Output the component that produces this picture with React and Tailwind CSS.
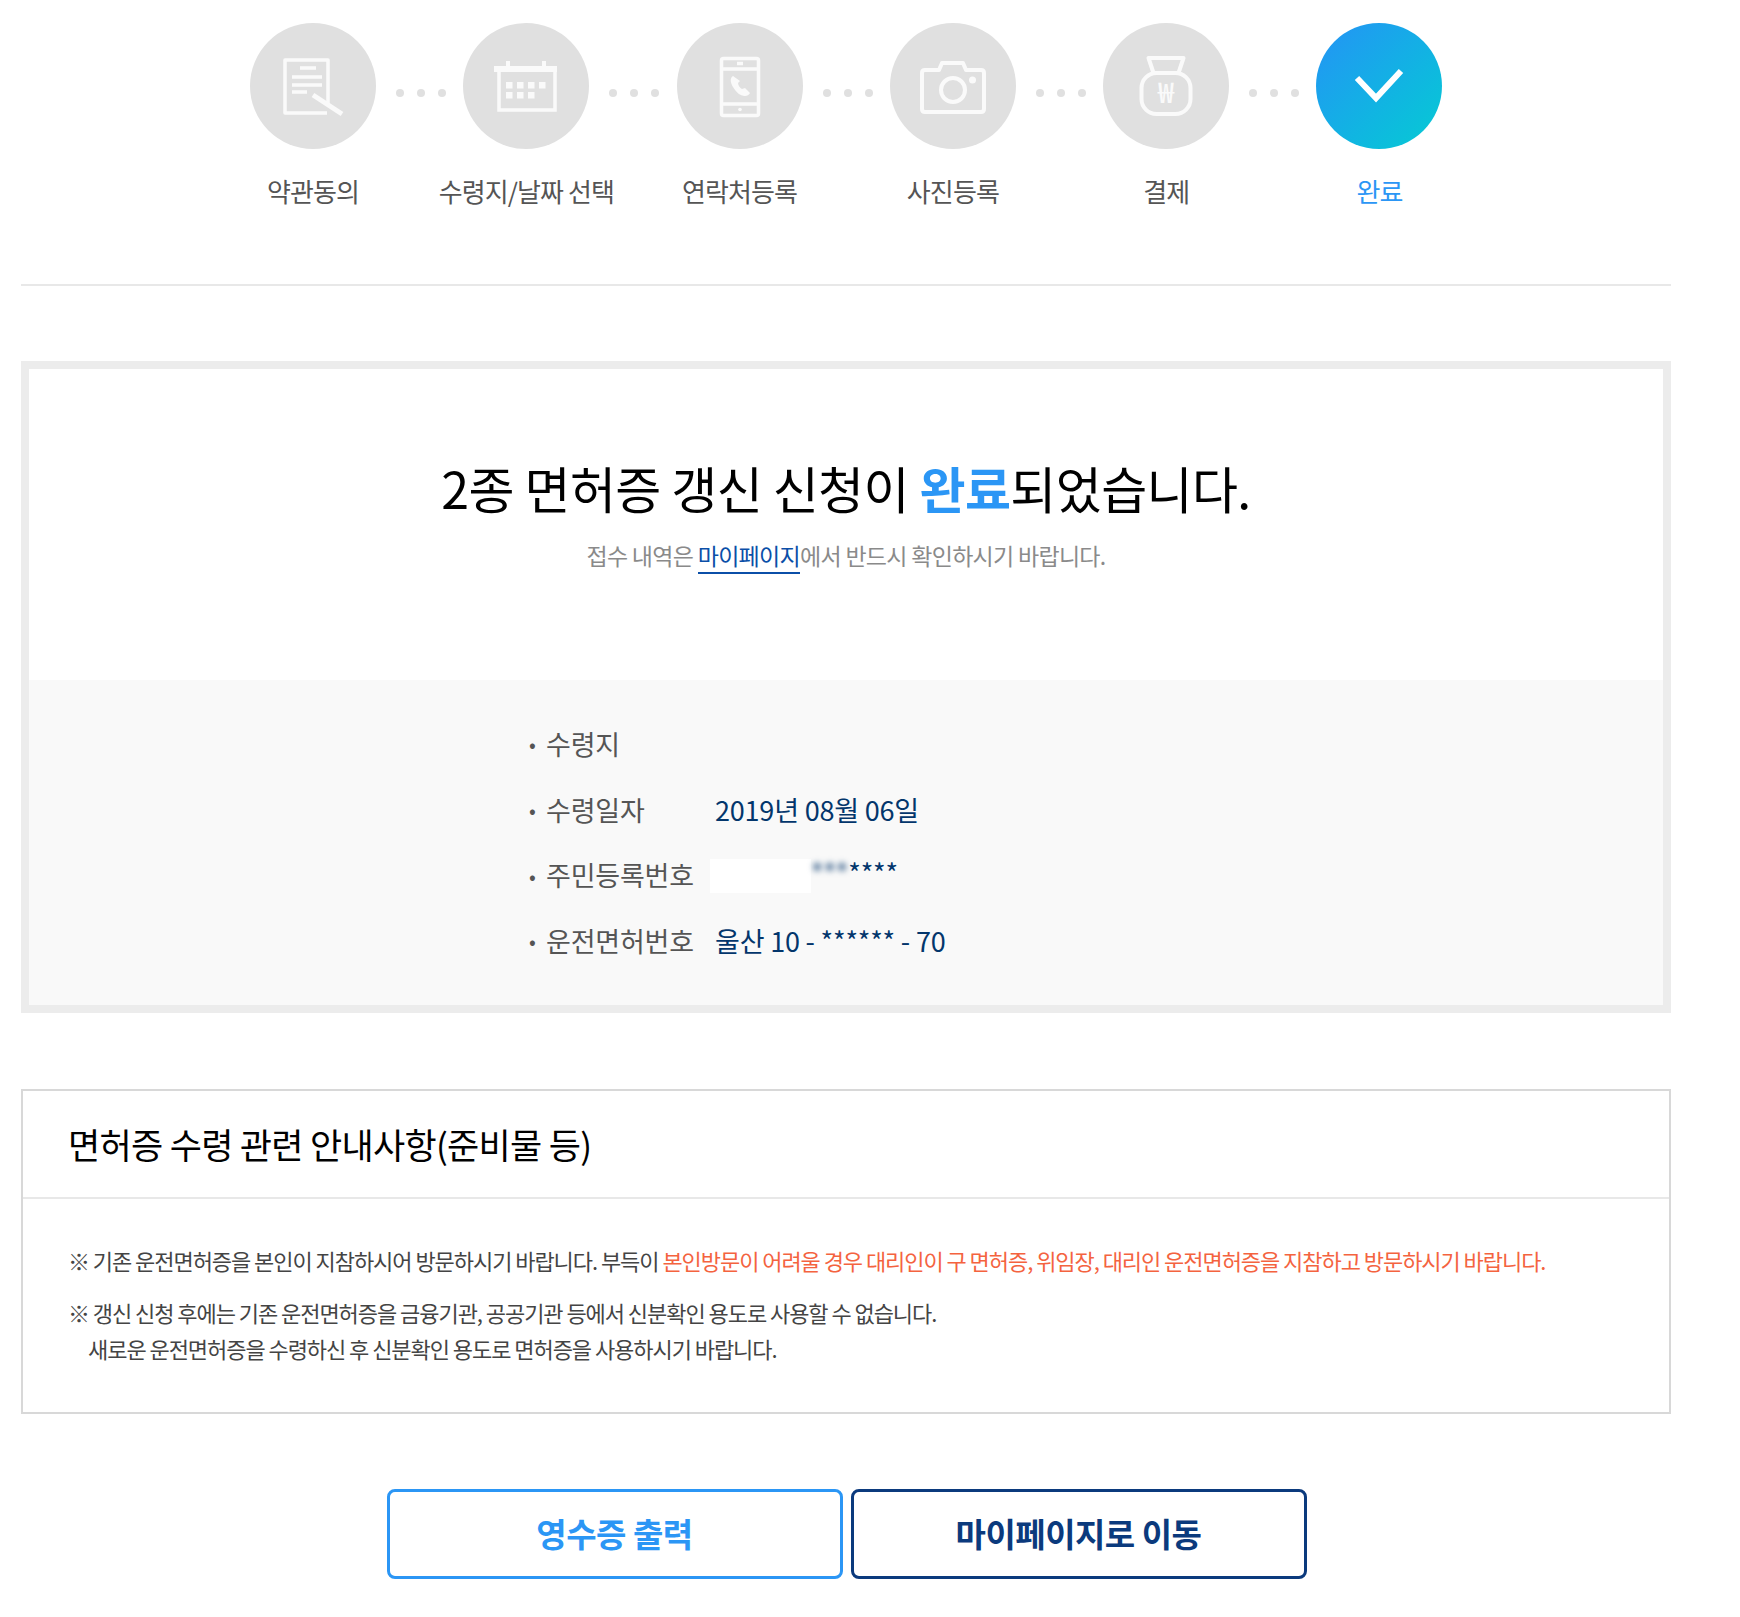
import React from 'react'

const steps = [
  { label: '약관동의', icon: 'doc' },
  { label: '수령지/날짜 선택', icon: 'calendar' },
  { label: '연락처등록', icon: 'phone' },
  { label: '사진등록', icon: 'camera' },
  { label: '결제', icon: 'bag' },
  { label: '완료', icon: 'check', active: true },
]

const StepIcon = ({ name }) => (
  <svg viewBox="0 0 126 126" className="w-[126px] h-[126px]" fill="none" stroke="#fafafa" strokeWidth="3.5">
    {name === 'doc' && (
      <>
        <path d="M78 82V37H35v53h42" strokeLinejoin="round" />
        <path d="M50 45h16M42 54h30M42 62h30M42 69h15" />
        <path d="M63 72l29 19" strokeWidth="5" />
      </>
    )}
    {name === 'calendar' && (
      <>
        <path d="M36 49v38h56V49" />
        <path d="M31 46h63" strokeWidth="6" />
        <path d="M45 38v6M81 38v6" strokeWidth="4" />
        <g fill="#fafafa" stroke="none">
          <rect x="43" y="59" width="6.5" height="6.5" />
          <rect x="54" y="59" width="6.5" height="6.5" />
          <rect x="65" y="59" width="6.5" height="6.5" />
          <rect x="76" y="59" width="6.5" height="6.5" />
          <rect x="43" y="69" width="6.5" height="6.5" />
          <rect x="54" y="69" width="6.5" height="6.5" />
          <rect x="65" y="69" width="6.5" height="6.5" />
        </g>
      </>
    )}
    {name === 'phone' && (
      <>
        <rect x="44.5" y="35.5" width="37" height="57" rx="2" />
        <path d="M45 46h36M45 81h36" />
        <path d="M60 40.5h6" />
        <circle cx="63" cy="86.5" r="1.8" fill="#fafafa" stroke="none" />
        <path d="M56 53c-3 2-3 6 0 11s7 9 12 9c2 0 4-1 5-3l-5-5-3 1c-2-1-4-4-4-6l2-2z" fill="#fafafa" stroke="none" />
      </>
    )}
    {name === 'camera' && (
      <>
        <path d="M35 47h14l3-7h21l3 7h15c2 0 3 1 3 3v36c0 2-1 3-3 3H35c-2 0-3-1-3-3V50c0-2 1-3 3-3z" strokeLinejoin="round" strokeWidth="4" />
        <circle cx="63" cy="67" r="12" strokeWidth="4" />
        <circle cx="82.5" cy="57" r="3.5" fill="#fafafa" stroke="none" />
      </>
    )}
    {name === 'bag' && (
      <>
        <path d="M45.5 35h35l-5 15h-25z" strokeLinejoin="round" strokeWidth="4" />
        <rect x="38.5" y="50" width="49" height="41" rx="15" strokeWidth="4" />
        <text x="63" y="80" textAnchor="middle" fill="#fafafa" stroke="none" fontSize="28" fontWeight="500" fontFamily="'Noto Sans CJK KR', sans-serif">₩</text>
      </>
    )}
    {name === 'check' && <path d="M41 55l19 20 25-27" stroke="#ffffff" strokeWidth="6" />}
  </svg>
)

const InfoRow = ({ label, children }) => (
  <div className="flex items-center h-[65.7px] text-[27px] tracking-[-0.2px]">
    <span className="w-[17px] text-[#555] text-[20px]">•</span>
    <span className="w-[169px] text-[#555]">{label}</span>
    <span className="flex items-center text-[#03366c]">{children}</span>
  </div>
)

const App = () => {
  return (
    <div className="w-[1740px] h-[1617px] bg-white pl-[21px] font-['Noto_Sans_CJK_KR',sans-serif]">
      <div className="w-[1650px]">
        {/* steps */}
        <div className="flex pl-[229px] pt-[23px] h-[284px]">
          {steps.map((step, i) => (
            <div key={step.label} className="flex flex-col w-[213.3px] shrink-0">
              <div className="flex">
                <div className={step.active ? 'w-[126px] h-[126px] rounded-full bg-gradient-to-br from-[#2492f5] to-[#08cbd2]' : 'w-[126px] h-[126px] rounded-full bg-[#e0e0e0]'}>
                  <StepIcon name={step.icon} />
                </div>
                {i < steps.length - 1 && (
                  <div className="flex items-center gap-[13px] pl-[20px] pt-[13px]">
                    <span className="w-[8px] h-[8px] rounded-full bg-[#e0e0e0]" />
                    <span className="w-[8px] h-[8px] rounded-full bg-[#e0e0e0]" />
                    <span className="w-[8px] h-[8px] rounded-full bg-[#e0e0e0]" />
                  </div>
                )}
              </div>
              <div className={step.active ? 'w-[126px] flex justify-center whitespace-nowrap mt-[22px] text-[26px] tracking-[-0.9px] text-[#2b96f5]' : 'w-[126px] flex justify-center whitespace-nowrap mt-[22px] text-[26px] tracking-[-0.9px] text-[#555]'}>
                {step.label}
              </div>
            </div>
          ))}
        </div>
        <div className="h-[2px] bg-[#e8e8e8]" />

        {/* done box */}
        <div className="mt-[75px] border-[8px] border-[#ececec]">
          <div className="h-[311px] flex flex-col items-center pt-[80px]">
            <h1 className="text-[50px] leading-[76px] tracking-[-0.6px] text-black whitespace-nowrap">
              2종 면허증 갱신 신청이 <strong className="font-bold text-[#2b96f5]">완료</strong>되었습니다.
            </h1>
            <p className="mt-[12px] text-[23px] leading-[36px] tracking-[-0.7px] text-[#8a8a8a]">
              접수 내역은 <a className="text-[#0b4fa8] border-b-2 border-[#0b4fa8]">마이페이지</a>에서 반드시 확인하시기 바랍니다.
            </p>
          </div>
          <div className="h-[325px] bg-[#f9f9f9] pl-[500px] pt-[31.5px]">
            <InfoRow label="수령지" />
            <InfoRow label="수령일자">2019년 08월 06일</InfoRow>
            <InfoRow label="주민등록번호">
              <span className="w-[101px] h-[34px] bg-white -ml-[5px]" />
              <span className="blur-[3px] -mt-[5px]">***</span>
              <span className="-mt-[5px]">****</span>
            </InfoRow>
            <InfoRow label="운전면허번호">울산 10 - ****** - 70</InfoRow>
          </div>
        </div>

        {/* notice */}
        <div className="mt-[76px] border-2 border-[#d8d8d8]">
          <h2 className="h-[108px] flex items-center pl-[45px] text-[35px] tracking-[-0.7px] text-black border-b-2 border-[#e8e8e8]">
            면허증 수령 관련 안내사항(준비물 등)
          </h2>
          <div className="h-[213px] pl-[45px] pt-[43px] text-[22px] tracking-[-1.05px] text-[#444]">
            <p className="leading-[36px]">
              ※ 기존 운전면허증을 본인이 지참하시어 방문하시기 바랍니다. 부득이 <span className="text-[#f4633f]">본인방문이 어려울 경우 대리인이 구 면허증, 위임장, 대리인 운전면허증을 지참하고 방문하시기 바랍니다.</span>
            </p>
            <p className="mt-[16px] leading-[36px]">※ 갱신 신청 후에는 기존 운전면허증을 금융기관, 공공기관 등에서 신분확인 용도로 사용할 수 없습니다.</p>
            <p className="leading-[36px] pl-[20px]">새로운 운전면허증을 수령하신 후 신분확인 용도로 면허증을 사용하시기 바랍니다.</p>
          </div>
        </div>

        {/* buttons */}
        <div className="mt-[75px] flex justify-center gap-[8px] pl-[1px]">
          <button className="w-[456px] h-[90px] border-[3px] border-[#2b96f5] rounded-[8px] text-[33px] tracking-[-0.5px] font-bold text-[#2b96f5]">영수증 출력</button>
          <button className="w-[456px] h-[90px] border-[3px] border-[#0b3a7d] rounded-[8px] text-[33px] tracking-[-0.5px] font-bold text-[#0b3a7d]">마이페이지로 이동</button>
        </div>
      </div>
    </div>
  )
}

export default App
